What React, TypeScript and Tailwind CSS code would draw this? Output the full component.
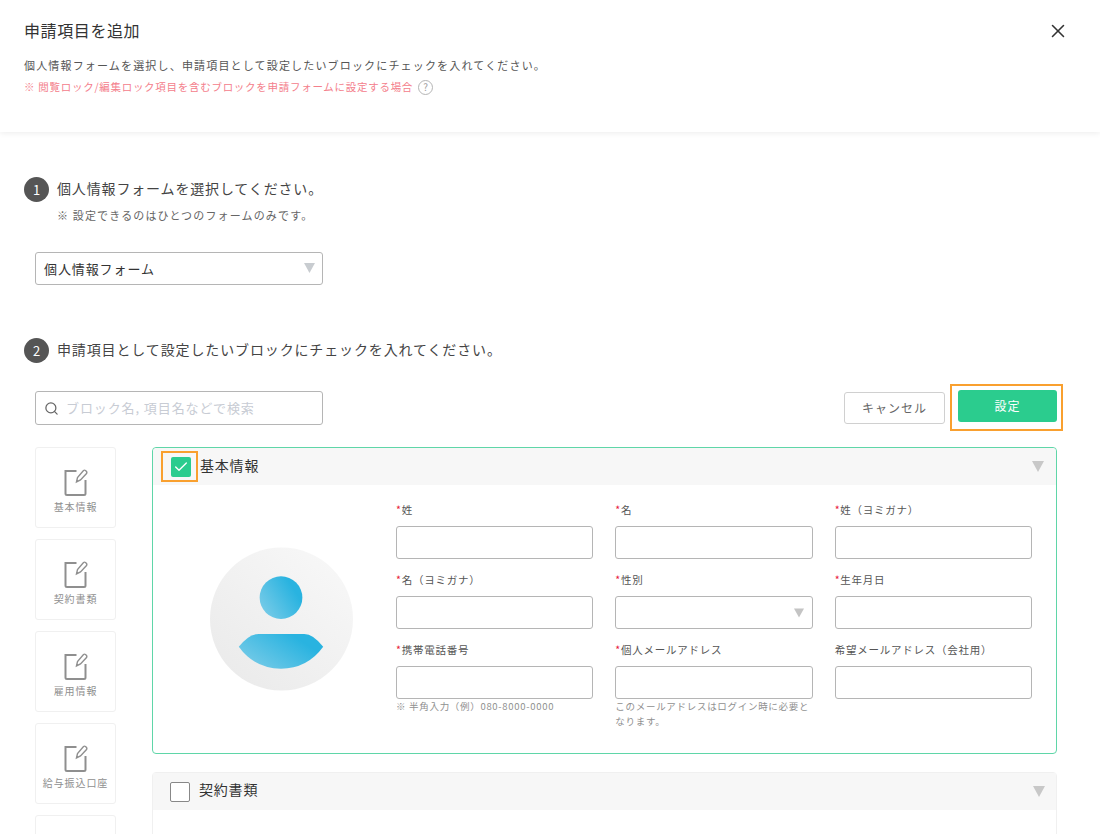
import { X, Search, Check } from 'lucide-react'

const font = { fontFamily: '"Noto Sans CJK JP", "Noto Sans", sans-serif' }

const sideItems = ['基本情報', '契約書類', '雇用情報', '給与振込口座', '']

const fields = [
  { label: '姓', required: true },
  { label: '名', required: true },
  { label: '姓（ヨミガナ）', required: true },
  { label: '名（ヨミガナ）', required: true },
  { label: '性別', required: true, select: true },
  { label: '生年月日', required: true },
  { label: '携帯電話番号', required: true, hint: '※ 半角入力（例）080-8000-0000' },
  { label: '個人メールアドレス', required: true, hint: 'このメールアドレスはログイン時に必要となります。' },
  { label: '希望メールアドレス（会社用）', required: false },
]

const Triangle = ({ className }: { className: string }) => (
  <svg viewBox="0 0 12 11" className={className}>
    <path d="M0 0h12L6 11z" fill="currentColor" />
  </svg>
)

const NoteIcon = () => (
  <svg width="24" height="28" viewBox="0 0 24 28" fill="none" stroke="#8f8f8f" strokeWidth="2">
    <path d="M12.500 2H1.500V24.500A1.500 1.500 0 0 0 3 26H20A1.500 1.500 0 0 0 21.500 24.500V11" />
    <path d="M12.500 13L13.500 8.500L19.500 1.500Q20.500 0.800 21.500 1.500L22.500 2.500Q23.200 3.500 22.500 4.500L16.500 11Z" strokeWidth="1.400" />
  </svg>
)

const Avatar = () => (
  <svg width="143" height="144" viewBox="0 0 144 144">
    <defs>
      <linearGradient id="bg" x1="0.850" y1="0.100" x2="0.150" y2="0.900">
        <stop offset="0" stopColor="#f7f7f7" />
        <stop offset="1" stopColor="#ebebeb" />
      </linearGradient>
      <linearGradient id="blue" x1="0" y1="0.800" x2="0.800" y2="0.300">
        <stop offset="0" stopColor="#7accE8" />
        <stop offset="1" stopColor="#29b3e0" />
      </linearGradient>
    </defs>
    <circle cx="72" cy="72" r="72" fill="url(#bg)" />
    <circle cx="71.500" cy="50.500" r="21.500" fill="url(#blue)" />
    <path d="M29 100Q39 87 49 87H95Q104 87 114 100Q98 122 71.500 122Q45 122 29 100Z" fill="url(#blue)" />
  </svg>
)

const StepTitle = ({ n, text, tracking }: { n: number; text: string; tracking: string }) => (
  <div className="flex items-center gap-[8px]">
    <div className="flex h-[25px] w-[25px] items-center justify-center rounded-full bg-[#555555] text-[13px] text-white">{n}</div>
    <div className={`-translate-y-[1px] text-[14px] text-[#444444] ${tracking}`}>{text}</div>
  </div>
)

const Field = ({ label, required, select, hint }: { label: string; required: boolean; select?: boolean; hint?: string }) => (
  <div className="flex flex-col">
    <div className="h-[17px] text-[10.500px] leading-[17px] tracking-[0.750px] text-[#555555]">
      {required && <span className="text-[#e8203a]">*</span>}
      {label}
    </div>
    <div className="relative mt-[8px] h-[33px] rounded-[3px] border border-[#b5b5b5] bg-white">
      {select && <Triangle className="absolute right-[8px] top-[11px] h-[10px] w-[10px] text-[#c4c4c4]" />}
    </div>
    {hint && <div className="text-[9.500px] leading-[15px] tracking-[0.700px] text-[#909090]">{hint}</div>}
  </div>
)

export default function App() {
  return (
    <div className="h-[834px] w-[1100px] overflow-hidden bg-white" style={font}>
      <header className="relative h-[132px] bg-white px-[24px] pt-[19px] shadow-[0_1px_6px_rgba(0,0,0,0.08)]">
        <div className="flex items-center justify-between pr-[7px]">
          <div className="text-[16px] leading-[22px] tracking-[0.600px] text-[#333333]">申請項目を追加</div>
          <X size={22} strokeWidth={1.700} className="translate-y-[1px] text-[#333333]" />
        </div>
        <div className="mt-[15px] text-[11px] leading-[18px] tracking-[1.170px] text-[#555555]">
          個人情報フォームを選択し、申請項目として設定したいブロックにチェックを入れてください。
        </div>
        <div className="mt-[4px] flex items-center text-[10.500px] leading-[18px] tracking-[0.720px] text-[#f4808c]">
          ※ 閲覧ロック/編集ロック項目を含むブロックを申請フォームに設定する場合
          <span className="ml-[5px] flex h-[15px] w-[15px] items-center justify-center rounded-full border border-[#b5b5b5] text-[10px] tracking-normal text-[#a0a0a0]">?</span>
        </div>
      </header>

      <main className="px-[23px] pt-[45px]">
        <div className="pl-[1px]">
          <StepTitle n={1} text="個人情報フォームを選択してください。" tracking="tracking-[0.850px]" />
        </div>
        <div className="ml-[34px] mt-[3px] text-[11px] leading-[20px] tracking-[1.150px] text-[#666666]">※ 設定できるのはひとつのフォームのみです。</div>
        <div className="relative ml-[12px] mt-[27px] flex h-[33px] w-[288px] items-center rounded-[3px] border border-[#b5b5b5] pl-[8px] text-[13px] tracking-[0.900px] text-[#333333]">
          個人情報フォーム
          <Triangle className="absolute right-[7px] top-[10px] h-[10px] w-[11px] text-[#c8ccd0]" />
        </div>

        <div className="mt-[53px] pl-[1px]">
          <StepTitle n={2} text="申請項目として設定したいブロックにチェックを入れてください。" tracking="tracking-[0.870px]" />
        </div>

        <div className="ml-[12px] mt-[21px] flex items-start justify-between pr-[14px]">
          <div className="mt-[7px] flex h-[34px] w-[288px] items-center rounded-[3px] border border-[#b5b5b5] pl-[8px] text-[13px] tracking-[0.900px] text-[#c8ccd4]">
            <Search size={15} strokeWidth={2} className="mr-[7px] text-[#666666]" />
            ブロック名, 項目名などで検索
          </div>
          <div className="flex items-center gap-[5px]">
            <button className="h-[32px] w-[101px] rounded-[3px] border border-[#d0d0d0] bg-white text-[12px] tracking-[1px] text-[#666666]">キャンセル</button>
            <div className="border-2 border-[#f9a02f] pb-[7px] pl-[6px] pr-[4px] pt-[4px]">
              <button className="block h-[32px] w-[99px] rounded-[3px] bg-[#2bcc8e] text-[12px] tracking-[1px] text-white">設定</button>
            </div>
          </div>
        </div>

        <div className="ml-[12px] mt-[16px] flex gap-[36px]">
          <div className="flex w-[81px] flex-col gap-[11.500px]">
            {sideItems.map((s, i) => (
              <div key={i} className="flex h-[80.500px] flex-col items-center rounded-[3px] border border-[#f0f0f0] pt-[21px]">
                <NoteIcon />
                <div className="mt-[3px] whitespace-nowrap text-[10px] leading-[14px] tracking-[0.900px] text-[#8f8f8f]">{s}</div>
              </div>
            ))}
          </div>

          <div className="flex w-[905px] flex-col gap-[18px]">
            <section className="h-[307px] rounded-[4px] border border-[#5fd6a8]">
              <div className="relative flex h-[37px] items-center justify-between rounded-t-[4px] bg-[#f7f7f7] pl-[18px] pr-[12px]">
                <div className="flex items-center">
                  <div className="flex h-[20px] w-[20px] items-center justify-center rounded-[2px] bg-[#2bcc8e]">
                    <Check size={16} strokeWidth={2} className="text-white" />
                  </div>
                  <div className="ml-[9px] -translate-y-[1px] text-[14px] tracking-[0.800px] text-[#333333]">基本情報</div>
                </div>
                <Triangle className="h-[11px] w-[12px] text-[#c8c8c8]" />
                <div className="absolute left-[8px] top-[3px] h-[31px] w-[37px] border-2 border-[#f9a02f]" />
              </div>
              <div className="flex pl-[57px] pr-[24px]">
                <div className="mt-[62px]">
                  <Avatar />
                </div>
                <div className="ml-[43px] mt-[16px] grid flex-1 grid-cols-3 content-start gap-x-[22px] gap-y-[12px]">
                  {fields.map((f) => (
                    <Field key={f.label} {...f} />
                  ))}
                </div>
              </div>
            </section>

            <section className="h-[100px] rounded-[4px] border border-[#f0f0f0]">
              <div className="flex h-[37px] items-center justify-between bg-[#f7f7f7] pl-[17px] pr-[11px]">
                <div className="flex items-center">
                  <div className="h-[20px] w-[20px] rounded-[2px] border border-[#888888] bg-white" />
                  <div className="ml-[9px] -translate-y-[2px] text-[14px] tracking-[0.800px] text-[#333333]">契約書類</div>
                </div>
                <Triangle className="h-[11px] w-[12px] text-[#c8c8c8]" />
              </div>
            </section>
          </div>
        </div>
      </main>
    </div>
  )
}
